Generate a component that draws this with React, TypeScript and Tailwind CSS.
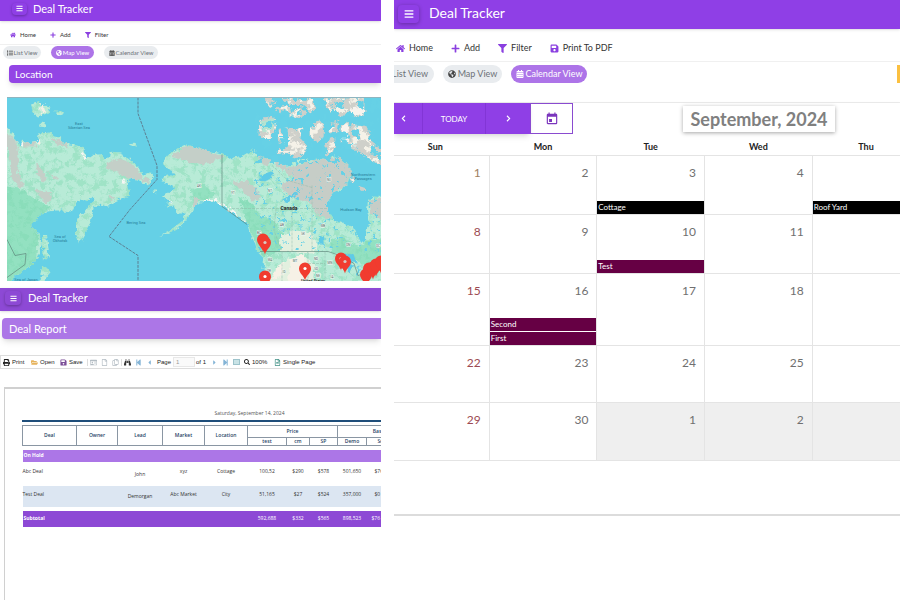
import type { ReactNode } from "react";
import {
  FaBars,
  FaHome,
  FaPlus,
  FaFilter,
  FaSave,
  FaList,
  FaGlobeAmericas,
  FaCalendarAlt,
  FaChevronLeft,
  FaChevronRight,
  FaPrint,
  FaFolderOpen,
  FaBinoculars,
  FaSearch,
  FaStepBackward,
  FaStepForward,
  FaCaretLeft,
  FaCaretRight,
  FaRegFileAlt,
  FaRegCopy,
  FaRegIdCard,
  FaRegFile,
} from "react-icons/fa";
import { MdEvent } from "react-icons/md";

const LAND =
  "M7 127L11 131 15 137 20 146 22 139 28 143 37 141 39 133 50 132 54 136 60 137 63 143 77 145 84 148 87 158 93 154 100 154 105 158 109 157 110 152 120 153 128 157 134 162 139 168 143 174 150 172 154 176 152 180 148 186 142 181 133 178 127 182 130 190 129 195 121 198 115 201 108 206 99 204 94 206 92 214 91 221 86 230 79 243 76 233 76 222 81 214 88 207 95 198 93 196 88 201 82 199 75 204 72 211 64 210 55 210 43 212 37 219 30 228 39 232 42 243 38 257 31 265 23 270 16 275 7 285 0 285 0 127Z" +
  "M163 162L168 156 172 152 180 147 187 144 200 148 210 151 224 153 232 159 243 155 253 149 257 156 270 158 280 163 290 166 300 158 312 160 323 158 328 162 333 155 341 158 350 168 351 174 347 184 340 190 333 193 328 202 328 210 333 218 342 222 353 227 357 235 360 242 365 242 365 230 370 223 367 210 368 200 374 196 388 197V288H268L263 273 264 264 262 256 256 250 254 242 250 233 247 223 240 216 233 213 223 205 215 202 207 200 198 203 193 208 190 214 182 225 170 232 160 236 171 229 183 220 186 213 177 213 174 206 167 207 170 200 163 197 170 191 175 187 168 183 161 180 167 173 174 175 170 169 164 166Z" +
  "M43 234L46 233 47 245 49 257 46 256 44 261 43 248ZM43 266L51 271 47 276 40 274ZM40 277L46 275 43 285H39ZM31 104L37 102 41 104 49 106 50 112 44 114 37 116 33 113ZM54 110L62 111 64 114 58 115ZM41 122L46 123 46 127 40 126ZM129 144L134 141 137 143 136 146 131 145ZM151 190L157 190 156 192Z";

const ISLANDS =
  "M264 98L273 97 276 103 270 106ZM275 107L288 106 292 112 300 106 307 113 300 117 288 115 281 113ZM283 98L297 97 304 101 312 98 318 104 311 112 302 104 291 104ZM324 98L345 97 364 98 364 112 359 117 350 113 341 117 335 107 330 112ZM260 119L272 117 277 123 274 132 268 139 265 142 259 135ZM278 131L287 126 294 131 302 126 301 139 307 146 304 153 297 157 287 152 277 153 281 147ZM311 124L317 120 324 124 323 137 317 142 311 135ZM327 124L338 120 336 132 330 133ZM341 126L348 122 351 131 349 144 341 142ZM325 138L335 137 334 150 327 155ZM352 124L364 125 370 131 369 139 378 146 388 155V168L370 159 360 151 350 147 351 137ZM350 178L355 177 353 183ZM359 186L365 188 362 190Z";

const LAKES =
  "M259 180L265 173 271 171 276 173 270 178 261 181ZM281 201L295 192 297 194 286 202ZM319 234L323 237 324 245 319 241ZM344 253L353 254 358 263 351 262 347 257ZM350 262L354 265 349 274 346 267ZM358 263L359 274 356 275Z";

const PROVINCES = [
  ["AK", 199, 186],
  ["YT", 233, 193],
  ["NT", 270, 191],
  ["NU", 329, 180],
  ["BC", 259, 233],
  ["AB", 282, 225],
  ["SK", 303, 234],
  ["MB", 323, 226],
  ["ON", 348, 245],
  ["QC", 378, 246],
  ["WA", 270, 260],
  ["MT", 295, 261],
  ["ND", 316, 259],
  ["SD", 316, 269],
  ["MN", 330, 263],
  ["NE", 318, 276],
  ["IA", 332, 277],
  ["OR", 269, 271],
  ["ID", 284, 272],
  ["WI", 341, 268],
] as const;

const PINS = [
  [263, 251],
  [265, 254],
  [265, 288],
  [305, 280],
  [341, 270],
  [345, 273],
  [366, 286],
  [369, 280],
  [373, 279],
  [376, 276],
  [381, 273],
];

function WorldMap() {
  return (
    <svg
      role="img"
      aria-label="Deal locations"
      viewBox="7 97 374 184"
      preserveAspectRatio="xMidYMid slice"
      className="block h-[184px] w-full border-t border-[#8fb5c0] bg-[#65d0e6]"
    >
      <defs>
        <clipPath id="land">
          <path d={LAND} />
        </clipPath>
        <clipPath id="islands">
          <path d={ISLANDS} />
        </clipPath>
        <filter id="coast" x="0" y="0" width="100%" height="100%" colorInterpolationFilters="sRGB">
          <feTurbulence type="fractalNoise" baseFrequency="0.22" numOctaves="3" seed="3" result="n" />
          <feDisplacementMap in="SourceGraphic" in2="n" scale="6" xChannelSelector="R" yChannelSelector="G" />
        </filter>
        <filter id="forest" x="0" y="0" width="100%" height="100%" colorInterpolationFilters="sRGB">
          <feTurbulence type="fractalNoise" baseFrequency="0.15" numOctaves="5" seed="4" />
          <feColorMatrix values="0 0 0 0 .5  0 0 0 0 .85  0 0 0 0 .7  6 0 0 0 -2.9" />
        </filter>
        <filter id="rock" x="0" y="0" width="100%" height="100%" colorInterpolationFilters="sRGB">
          <feTurbulence type="fractalNoise" baseFrequency="0.12" numOctaves="4" seed="9" />
          <feColorMatrix values="0 0 0 0 .96  0 0 0 0 .95  0 0 0 0 .91  10 0 0 0 -4.9" />
        </filter>
        <filter id="ponds" x="0" y="0" width="100%" height="100%" colorInterpolationFilters="sRGB">
          <feTurbulence type="fractalNoise" baseFrequency="0.22" numOctaves="3" seed="21" />
          <feColorMatrix values="0 0 0 0 .4  0 0 0 0 .82  0 0 0 0 .9  14 0 0 0 -8.9" />
        </filter>
        <filter id="inlets" x="0" y="0" width="100%" height="100%" colorInterpolationFilters="sRGB">
          <feTurbulence type="fractalNoise" baseFrequency="0.1" numOctaves="4" seed="6" />
          <feColorMatrix values="0 0 0 0 .4  0 0 0 0 .82  0 0 0 0 .9  18 0 0 0 -10.3" />
        </filter>
      </defs>
      <g filter="url(#coast)">
        <rect x="0" y="90" width="390" height="198" fill="#65d0e6" />
        <path d={LAND} fill="#b8ebd7" />
        <g clipPath="url(#land)">
          <path
            d="M0 185L20 188 34 198 50 206 40 218 36 260 7 285H0ZM238 196L252 203 262 216 275 221 285 236 290 250 262 256 246 220ZM190 190L205 184 215 195 205 200 192 202ZM330 240L345 238 360 246 372 238 388 240V262L365 266 350 255 332 252Z"
            fill="#93e1c1"
          />
          <rect x="7" y="97" width="374" height="184" filter="url(#forest)" opacity=".45" />
          <path
            d="M0 130L16 138 19 160 17 172 25 186 18 187 11 176 9 150ZM36 160L42 170 47 178 43 181 37 172ZM34 189L50 192 52 201 45 202ZM47 171L58 178 55 180ZM22 142L37 142 36 146 24 146ZM50 137L62 141 70 147 58 145ZM106 162L120 158 134 165 143 177 150 178 149 185 141 179 128 178 118 172 105 168ZM108 195L115 198 111 201ZM172 155L187 145 205 149 224 157 205 164 190 162ZM232 182L247 180 258 190 261 199 252 200 242 189ZM193 197L200 198 197 206 192 205ZM257 155L272 159 268 166 261 163Z"
            fill="#c4cfc8"
          />
          <path
            d="M268 158L290 167 323 158 341 157 352 170 346 185 333 193 328 210 332 220 320 216 310 203 288 196 281 184 294 177 282 169ZM370 200L388 197V222L371 214Z"
            fill="#c6cdc7"
          />
          <path
            d="M280 236L294 229 312 233 317 247 313 253 281 251ZM286 260L304 254 314 264 313 288H268L275 268Z"
            fill="#e2f0df"
          />
          <path d="M291 257L304 254 307 288H287ZM277 265L283 262 284 275 272 279Z" fill="#f6f1e6" />
          <path
            d="M204 200L215 200 224 206 233 212 245 222M82 151L86 158M122 180L126 181M167 200L172 202M20 143L24 145"
            fill="none"
            stroke="#f5f6f3"
            strokeWidth="3"
            strokeDasharray="4 1"
          />
          <rect x="255" y="155" width="126" height="95" filter="url(#ponds)" />
        </g>
        <path d={ISLANDS} fill="#cfd0ca" stroke="#cfd0ca" strokeLinejoin="round" />
        <g clipPath="url(#islands)">
          <rect x="250" y="97" width="131" height="100" filter="url(#rock)" />
          <path d="M260 120L273 118 275 128 263 133Z" fill="#b6e3d0" />
          <path d="M342 125L348 123 349 142 341 141ZM350 108L364 106V114L352 117Z" fill="#f7f4ee" />
        </g>
        <rect x="256" y="94" width="126" height="68" filter="url(#inlets)" />
        <path d="M40 104L44 103 45 112 41 114ZM37 142L38 137 40 143Z" fill="#f4efe4" />
        <path d={LAKES} fill="#5fcbe6" />
      </g>
      <path
        d="M138 97V113L157 165V179L130 209 109 236 138 255V281"
        fill="none"
        stroke="#5d7f92"
        strokeWidth="1"
        strokeDasharray="3 1"
      />
      <path
        d="M222 154V206L232 213 247 224M7 239L15 255 26 253 25 264 7 277M260 251H328L340 255 354 263 358 275 381 269"
        fill="none"
        stroke="#587b72"
        strokeWidth=".6"
      />
      <path
        d="M232 208H328M312 185V251M272 165L288 180 312 187M292 208V251M276 208L274 230 282 251M282 251V281M308 251V281M325 251V281M308 263H325"
        fill="none"
        stroke="#8fb9a8"
        strokeWidth=".5"
        strokeDasharray="3 1"
      />
      <g fontFamily="Roboto, sans-serif" textAnchor="middle" fontSize="4" fill="#277c98">
        <text x="79" y="124">East</text>
        <text x="79" y="128">Siberian Sea</text>
        <text x="136" y="223">Bering Sea</text>
        <text x="60" y="237">Sea of</text>
        <text x="60" y="241">Okhotsk</text>
        <text x="26" y="280">Sea of Japan</text>
        <text x="363" y="175">Northwestern</text>
        <text x="363" y="179">Passages</text>
        <text x="351" y="210">Hudson Bay</text>
        {PROVINCES.map(([name, x, y]) => (
          <text key={name} x={x} y={y} fontSize="3" fill="#4b5f59" stroke="#eef8f3" strokeWidth="1" paintOrder="stroke">
            {name}
          </text>
        ))}
        <text x="289" y="209" fontSize="5" fontWeight="700" fill="#1f2a2a">Canada</text>
        <text x="313" y="281" fontSize="4" fontWeight="700" fill="#1f2a2a">United States</text>
      </g>
      {PINS.map(([x, y], i) => (
        <g key={i} transform={`translate(${x} ${y})`}>
          <path
            d="M0 0C-1-5-6-7-6-12A6 6 0 0 1 6-12C6-7 1-5 0 0Z"
            fill="#f13c2f"
          />
          {i < 6 && <circle cy="-12" r="1.6" fill={i === 2 || i === 3 ? "#fff" : "#d9c9c2"} />}
        </g>
      ))}
    </svg>
  );
}

function MenuItem({ icon, label }: { icon: ReactNode; label: string }) {
  return (
    <button type="button" className="flex items-center gap-1 whitespace-nowrap">
      <span className="text-[#8a3fe0]">{icon}</span>
      {label}
    </button>
  );
}

function MapPanel() {
  return (
    <section>
      <header className="flex h-[21px] items-center gap-[6px] bg-[#8f3fe6] pb-1 pl-3 text-white shadow">
        <button type="button" aria-label="Menu" className="flex h-3 w-[15px] items-center justify-center rounded-sm text-[7px] shadow-[0_1px_3px_rgba(0,0,0,0.3)]">
          <FaBars />
        </button>
        <h1 className="text-[11px] leading-3">Deal Tracker</h1>
      </header>
      <nav className="flex h-6 items-center gap-[14px] border-b border-[#f0f0f0] pl-[10px] pt-1 text-[6px] text-[#333]">
        <MenuItem icon={<FaHome />} label="Home" />
        <MenuItem icon={<FaPlus />} label="Add" />
        <MenuItem icon={<FaFilter />} label="Filter" />
      </nav>
      <div className="flex h-5 items-start gap-[10px] pl-[3px] pt-px text-[6px] text-[#6d7278]">
        <button type="button" className="flex h-[13px] w-[38px] items-center justify-center gap-px rounded-full bg-[#e9ecef]">
          <FaList className="text-[#444]" /> List View
        </button>
        <button type="button" className="flex h-[13px] w-[43px] items-center justify-center gap-px rounded-full bg-[#ad74e8] text-white">
          <FaGlobeAmericas /> Map View
        </button>
        <button type="button" className="flex h-[13px] w-[54px] items-center justify-center gap-px rounded-full bg-[#e9ecef]">
          <FaCalendarAlt className="text-[#555]" /> Calendar View
        </button>
      </div>
      <h2 className="ml-[9px] h-[18px] rounded-l-sm bg-[#9345e5] pl-[6px] text-[10px] leading-[18px] text-white shadow-md">
        Location
      </h2>
      <div className="ml-[7px] mt-[14px]">
        <WorldMap />
      </div>
    </section>
  );
}

function ToolIcon({ label, children }: { label: string; children: ReactNode }) {
  return (
    <button type="button" aria-label={label} className="flex w-[11px] items-center justify-center">
      {children}
    </button>
  );
}

const dealRows = [
  ["Abc Deal", "", "John", "xyz", "Cottage", "100,52", "$290", "$578", "501,650", "$76"],
  ["Test Deal", "", "Demorgan", "Abc Market", "City", "51,165", "$27", "$524", "357,000", "$0"],
];

const subtotals = ["592,688", "$332", "$565", "898,523", "$76"];

function ReportPanel() {
  const head = "border border-[#8a96a3] font-semibold";
  return (
    <section className="mt-[7px] flex grow flex-col">
      <header className="flex h-[23px] items-center gap-[7px] bg-[#8d49d5] pb-[3px] pl-[5px] text-white shadow">
        <button type="button" aria-label="Menu" className="flex h-[14px] w-4 items-center justify-center rounded-sm text-[7px] shadow-[0_1px_3px_rgba(0,0,0,0.3)]">
          <FaBars />
        </button>
        <h1 className="text-[11px] leading-3">Deal Tracker</h1>
      </header>
      <h2 className="ml-[2px] mt-[7px] h-[21px] rounded-l-sm bg-[#ac76e7] pl-[7px] text-[11px] leading-[21px] text-white shadow-md">
        Deal Report
      </h2>
      <div className="mt-4 flex h-[14px] items-center border-y border-l border-[#ddd] pl-[2px] font-['Liberation_Sans',sans-serif] text-[6px] text-[#222]">
        <button type="button" className="flex w-[28px] items-center gap-[2px]"><FaPrint className="text-[7px]" />Print</button>
        <button type="button" className="flex w-[29px] items-center gap-[2px]"><FaFolderOpen className="text-[7px] text-[#e6b35c]" />Open</button>
        <button type="button" className="flex w-[27px] items-center gap-[2px]"><FaSave className="text-[7px] text-[#7c4f98]" />Save</button>
        <div className="flex border-l border-[#ddd] text-[7px] text-[#b3bcc3]">
          <ToolIcon label="Contents"><FaRegIdCard /></ToolIcon>
          <ToolIcon label="Page"><FaRegFile /></ToolIcon>
          <ToolIcon label="Copy"><FaRegCopy /></ToolIcon>
        </div>
        <div className="flex border-l border-[#ddd] text-[7px] text-[#84b4d6]">
          <ToolIcon label="Find"><FaBinoculars className="text-[#333]" /></ToolIcon>
          <ToolIcon label="First page"><FaStepBackward /></ToolIcon>
          <ToolIcon label="Previous page"><FaCaretLeft /></ToolIcon>
        </div>
        <label htmlFor="page-number" className="ml-[2px] w-4">Page</label>
        <input id="page-number" defaultValue="1" className="h-[10px] w-[22px] border border-[#e8e8e8] bg-[#fafafa] pl-[2px] text-[#999]" />
        <span className="w-[14px] whitespace-nowrap pl-px">of 1</span>
        <div className="flex text-[7px] text-[#84b4d6]">
          <ToolIcon label="Next page"><FaCaretRight /></ToolIcon>
          <ToolIcon label="Last page"><FaStepForward /></ToolIcon>
          <ToolIcon label="Full screen"><span className="h-[6px] w-[7px] border border-[#9dc3cb] bg-[#c9e3e6]" /></ToolIcon>
        </div>
        <button type="button" className="flex w-[32px] items-center gap-[2px] pl-[2px]"><FaSearch />100%</button>
        <button type="button" className="flex items-center gap-[2px] whitespace-nowrap">
          <FaRegFileAlt className="text-[7px] text-[#3f8f84]" />Single Page
        </button>
      </div>
      <div className="ml-1 mt-[18px] grow overflow-hidden border-l border-t-2 border-[#d0d0d0] pl-[17px] pt-[21px] font-['Open_Sans','Noto_Sans',sans-serif] text-[5px] leading-[7px] text-[#333]">
        <p className="w-[455px] pb-[3px] text-center text-[#555]">Saturday, September 14, 2024</p>
        <div className="h-[2px] bg-[#1f4e7a]" />
        <table className="mt-[3px] w-[374px] table-fixed border-collapse text-center">
          <colgroup>
            <col className="w-[54px]" />
            <col className="w-[41px]" />
            <col className="w-[45px]" />
            <col className="w-[42px]" />
            <col className="w-[43px]" />
            <col className="w-[39px]" />
            <col className="w-[23px]" />
            <col className="w-[28px]" />
            <col className="w-[29px]" />
            <col className="w-[30px]" />
          </colgroup>
          <thead className="text-[#1f3f66]">
            <tr className="h-3">
              {["Deal", "Owner", "Lead", "Market", "Location"].map((name) => (
                <th key={name} rowSpan={2} className={head}>{name}</th>
              ))}
              <th colSpan={3} className={head}>Price</th>
              <th colSpan={2} className={`${head} pl-5`}>Bas</th>
            </tr>
            <tr className="h-2">
              {["test", "cm", "SP", "Demo", "Sco"].map((name) => (
                <th key={name} className={`${head} p-0`}>{name}</th>
              ))}
            </tr>
          </thead>
          <tbody>
            <tr className="h-1"><td colSpan={10} /></tr>
            <tr className="h-3 bg-[#ac76e7] text-left text-white">
              <th colSpan={10} className="pl-px font-bold">On Hold</th>
            </tr>
            {dealRows.map((row, r) => (
              <tr key={row[0]} className={r ? "h-[21px] bg-[#dce6f2]" : "h-6"}>
                {row.map((cell, c) => (
                  <td
                    key={c}
                    className={
                      c === 0 ? "pb-1 text-left" : c === 2 ? "pt-px" : c === 9 ? "pb-1 pl-2 text-left" : "whitespace-nowrap pb-1"
                    }
                  >
                    {cell}
                  </td>
                ))}
              </tr>
            ))}
            <tr className="h-1"><td colSpan={10} /></tr>
            <tr className="h-4 bg-[#8d49d5] text-white">
              <th colSpan={5} className="pl-px text-left font-bold">Subtotal</th>
              {subtotals.map((value, i) => (
                <td key={i} className={i === 4 ? "pl-[5px] text-left" : ""}>{value}</td>
              ))}
            </tr>
          </tbody>
        </table>
      </div>
    </section>
  );
}

type Deal = { name: string; color: string };
type Day = { day: string; deals?: Deal[]; other?: boolean };

const BLACK = "bg-black";
const PLUM = "bg-[#660044]";

const weeks: { height: string; days: Day[] }[] = [
  {
    height: "h-[59px]",
    days: [{ day: "1" }, { day: "2" }, { day: "3", deals: [{ name: "Cottage", color: BLACK }] }, { day: "4" }, { day: "", deals: [{ name: "Roof Yard", color: BLACK }] }],
  },
  {
    height: "h-[59px]",
    days: [{ day: "8" }, { day: "9" }, { day: "10", deals: [{ name: "Test", color: PLUM }] }, { day: "11" }, { day: "" }],
  },
  {
    height: "h-[71px]",
    days: [{ day: "15" }, { day: "16", deals: [{ name: "Second", color: PLUM }, { name: "First", color: PLUM }] }, { day: "17" }, { day: "18" }, { day: "" }],
  },
  {
    height: "h-[57px]",
    days: [{ day: "22" }, { day: "23" }, { day: "24" }, { day: "25" }, { day: "" }],
  },
  {
    height: "h-[58px]",
    days: [{ day: "29" }, { day: "30" }, { day: "1", other: true }, { day: "2", other: true }, { day: "", other: true }],
  },
];

function CalendarPanel() {
  return (
    <section className="overflow-hidden">
      <header className="flex h-[29px] items-center gap-[10px] bg-[#8f3fe6] pb-1 pl-1 text-white shadow">
        <button type="button" aria-label="Menu" className="mt-[2px] flex h-[18px] w-[21px] items-center justify-center rounded text-[10px] shadow-[0_1px_4px_rgba(0,0,0,0.3)]">
          <FaBars />
        </button>
        <h1 className="text-[14px] leading-5">Deal Tracker</h1>
      </header>
      <nav className="flex h-[33px] items-center gap-[18px] border-b border-[#f0f0f0] pl-[2px] pt-[6px] text-[9px] text-[#333]">
        <MenuItem icon={<FaHome />} label="Home" />
        <MenuItem icon={<FaPlus />} label="Add" />
        <MenuItem icon={<FaFilter />} label="Filter" />
        <MenuItem icon={<FaSave />} label="Print To PDF" />
      </nav>
      <div className="flex h-[41px] items-start gap-[9px] border-b border-[#ededed] pt-[3px] text-[9px] text-[#6d7278]">
        <button type="button" className="-ml-3 flex h-[18px] w-[52px] items-center justify-end gap-[2px] rounded-full bg-[#e9ecef] pr-[6px]">
          <FaList className="text-[8px] text-[#444]" /> List View
        </button>
        <button type="button" className="flex h-[18px] w-[59px] items-center justify-center gap-[2px] rounded-full bg-[#e9ecef]">
          <FaGlobeAmericas className="text-[8px] text-[#444]" /> Map View
        </button>
        <button type="button" className="flex h-[18px] w-[76px] items-center justify-center gap-[2px] rounded-full bg-[#ad74e8] text-white">
          <FaCalendarAlt className="text-[8px]" /> Calendar View
        </button>
        <span className="ml-auto h-[18px] w-[3px] bg-[#fbc040]" />
      </div>
      <div className="border-b-2 border-[#dcdcdc] pb-[53px] shadow-sm">
        <div className="flex h-[31px] text-white">
          <div className="flex shadow-md">
            <button type="button" aria-label="Previous month" className="flex w-[28px] items-center bg-[#8f3fe6] pl-[6px] text-[7px]">
              <FaChevronLeft />
            </button>
            <button type="button" className="w-[64px] border-x border-[#8235d6] bg-[#8f3fe6] text-[8px]">TODAY</button>
            <button type="button" aria-label="Next month" className="flex w-11 items-center justify-center bg-[#8f3fe6] text-[7px]">
              <FaChevronRight />
            </button>
          </div>
          <button type="button" aria-label="Pick a date" className="flex w-[43px] items-center justify-center border border-[#8a4bd0] text-[14px] text-[#7b35bd]">
            <MdEvent className="-scale-x-100" />
          </button>
          <h2 className="ml-[110px] mt-[3px] flex h-[26px] w-[152px] items-center justify-center bg-white text-[18px] font-bold text-[#808080] shadow-[0_1px_4px_rgba(0,0,0,0.35)]">
            September, 2024
          </h2>
        </div>
        <table className="-ml-[13px] w-[106.6%] table-fixed border-collapse">
          <thead>
            <tr className="h-[21px] text-[9px] text-[#222]">
              {["Sun", "Mon", "Tue", "Wed", "Thu"].map((name) => (
                <th key={name} className="pt-1 font-bold">{name}</th>
              ))}
            </tr>
          </thead>
          <tbody>
            {weeks.map((week, w) => (
              <tr key={w} className={week.height}>
                {week.days.map((d, i) => (
                  <td key={i} className={`h-[inherit] border border-[#e4e4e4] p-0 align-top ${d.other ? "bg-[#efefef]" : ""}`}>
                    <div className="flex h-full flex-col justify-between">
                      <div className={`h-11 pr-2 pt-[9px] text-right text-[12px] leading-4 ${i === 0 ? (w ? "text-[#9c4a52]" : "text-[#a08060]") : "text-[#707070]"}`}>
                        {d.day}
                      </div>
                      <div className="flex flex-col gap-px">
                        {d.deals?.map((deal) => (
                          <div key={deal.name} className={`h-[13px] pl-px text-[8px] leading-[13px] text-white ${deal.color}`}>
                            {deal.name}
                          </div>
                        ))}
                      </div>
                    </div>
                  </td>
                ))}
              </tr>
            ))}
          </tbody>
        </table>
      </div>
    </section>
  );
}

export default function App() {
  return (
    <main className="grid min-h-screen grid-cols-[381fr_506fr] gap-[13px] overflow-hidden bg-white font-['Lato',sans-serif]">
      <div className="flex min-w-0 flex-col overflow-hidden">
        <MapPanel />
        <ReportPanel />
      </div>
      <div className="min-w-0">
        <CalendarPanel />
      </div>
    </main>
  );
}
